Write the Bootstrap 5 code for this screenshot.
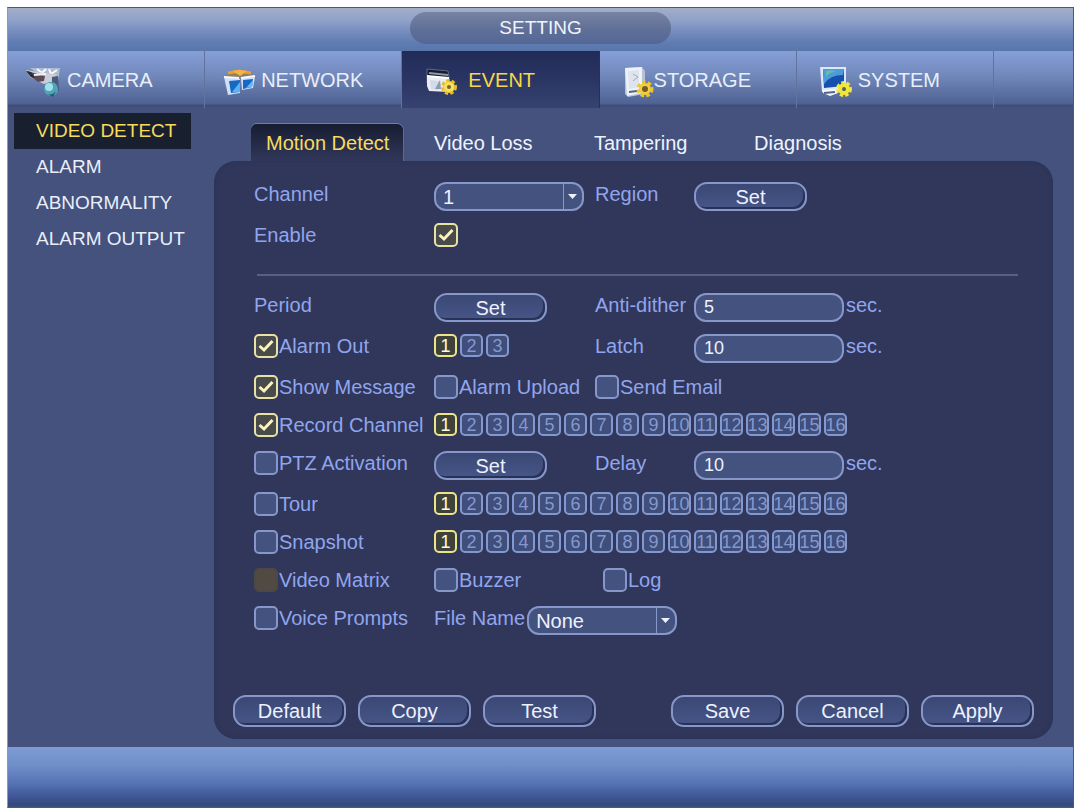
<!DOCTYPE html>
<html lang="en">
<head>
<meta charset="utf-8">
<meta name="viewport" content="width=device-width, initial-scale=1">
<title>Setting</title>
<link href="https://cdn.jsdelivr.net/npm/bootstrap@5.3.0/dist/css/bootstrap.min.css" rel="stylesheet">
<style>
  :root { --line: #8797ca; --label: #91a5ee; --panel: #30375a; --field: #44527f; }
  body { background: #fff; font-family: "Liberation Sans", Arial, sans-serif; font-size: 20px; line-height: 24px; padding: 7px 2px 2px 7px; }
  .app { min-height: calc(100vh - 9px); background: #44527d; border: 1px solid #4c5878; border-left-color: #8c97b5; }
  .titlebar { height: 43px; padding-top: 4px; background: linear-gradient(#a3aec8 0%, #8fa2c9 28%, #7189bb 60%, #5f7db3 80%, #5876aa 100%); }
  .title-pill { width: 261px; height: 32px; border-radius: 16px; font-size: 19px; line-height: 32px; color: #f0f4ff; background: linear-gradient(#7783a2, #5f6f96 55%, #546796); }
  .mainnav { display: grid; grid-template-columns: repeat(5, 197fr) 79fr; height: 57px; background: linear-gradient(#869fd8, #7087b9 45%, #4f6293 92%, #3c4b78 96%, #44527d); }
  .mainnav a { padding-left: 17px; color: #e9eefb; text-decoration: none; white-space: nowrap; border-right: 1px solid #61749f; }
  .mainnav a.active { color: #f7d64a; background: linear-gradient(#222b57, #2a3564 50%, #36426f); border-right-color: #25305c; }
  .mainnav svg { flex: none; height: 36px; }
  .sidebar { width: 206px; padding: 5px 23px 0 6px; }
  .sidebar a { height: 36px; line-height: 36px; padding-left: 22px; font-size: 19px; color: #e9eefb; text-decoration: none; white-space: nowrap; }
  .sidebar a.active { color: #f7dc5c; background: #182030; }
  .workspace { padding: 16px 20px 8px 0; }
  .subtabs { padding-left: 37px; }
  .subtabs button { height: 37px; width: 160px; padding: 0 15px; border: 0; background: none; color: #eef2ff; text-align: left; white-space: nowrap; }
  .subtabs button.active { width: 152px; margin-right: 16px; color: #f7dc5c; border-radius: 6px 6px 0 0; background: linear-gradient(#171c30, #262d4b 60%, var(--panel)); box-shadow: 0 -1px 0 #707da5, 1px 0 0 #5d6a96; }
  .panel { background: var(--panel); border-radius: 22px; padding: 21px 19px 12px; box-shadow: inset 0 0 4px #293258; }
  .settings { padding: 0 16px 0 21px; color: var(--label); }
  .line { display: grid; grid-template-columns: 180fr 161fr 99fr 324fr; align-items: start; margin-bottom: 12px; min-height: 26px; white-space: nowrap; }
  .line > * { min-width: 0; }
  .wide { grid-column: 2 / -1; }
  .rule { height: 2px; background: #566082; margin: 25px 0 17px 3px; }
  .unit { gap: 2px; }
  .pill { width: 113px; height: 29px; padding: 0; border: 2px solid var(--line); border-radius: 13px; background: linear-gradient(#3b4875, #465687); box-shadow: inset -2px -2px 0 #283156; color: #eef2ff; line-height: 24px; }
  .actions, .action-group { gap: 12px; }
  .actions .pill { height: 32px; }
  .field { width: 150px; height: 29px; padding: 0 8px; border: 2px solid var(--line); border-radius: 12px; background-color: var(--field); color: #eef2ff; font-size: 18px; line-height: 24px; }
  select.field { appearance: none; padding: 0 24px 0 7px; font-size: 20px; background-repeat: no-repeat; background-position: right center;
    background-image: url("data:image/svg+xml,%3Csvg xmlns='http://www.w3.org/2000/svg' width='19' height='25'%3E%3Cpath d='M.5 0v25' stroke='%238797ca'/%3E%3Cpath d='M5 10h9l-4.500 5z' fill='%23eef2ff'/%3E%3C/svg%3E"); }
  .tick { appearance: none; flex: none; width: 24px; height: 24px; margin: 0 1px 0 0; border: 2px solid var(--line); border-radius: 5px; background: var(--field) center / 20px no-repeat; }
  .tick:checked { border-color: #e8e3a2; background-color: #484a4c;
    background-image: url("data:image/svg+xml,%3Csvg xmlns='http://www.w3.org/2000/svg' viewBox='0 0 20 20'%3E%3Cpath d='M3.500 10l4.500 4L16.500 5' fill='none' stroke='%23fbf2bd' stroke-width='3'/%3E%3C/svg%3E"); }
  .tick:disabled { border-color: #4d4846; background-color: #504a42; }
  .tiles { gap: 3px; }
  .tiles label { width: 23px; height: 23px; border: 2px solid #8498d0; border-radius: 5px; background: #3f4e7b; color: #8498cf; font-size: 18px; line-height: 20px; display: flex; justify-content: center; overflow: hidden; }
  .tiles .btn-check:checked + label { border-color: #ece48a; background: #3f4238; color: #fffbe0; }
  .bottombar { height: 60px; background: linear-gradient(#7e9bd3, #6f8fc9 30%, #5674b3 60%, #435c9d 78%, #33497f 96%, #3d5173); }
</style>
</head>
<body>
<div class="app d-flex flex-column">
  <header class="titlebar"><h1 class="title-pill mx-auto mb-0 fw-normal text-center">SETTING</h1></header>

  <nav class="mainnav" aria-label="Sections">
    <a href="#" class="d-flex align-items-center">
      <svg width="42" viewBox="0 0 42 36" aria-hidden="true">
        <path d="M5 6h30l-2 13-7 2-7-5z" fill="#aebbd2"/>
        <path d="M12 7l5 4 4-4M24 7l2 5 6-4" fill="none" stroke="#f7faff" stroke-width="2"/>
        <path d="M1 8l18 3 12 1-3 7-9 3-14-7z" fill="#c9ced8"/>
        <path d="M2 9l18 5-1 5-6 1-8-6z" fill="#5d4c58"/>
        <path d="M1 9l5 1 4 6-4-1z" fill="#2f2932"/><path d="M9 13l12-1" stroke="#f0f2f7" stroke-width="2"/>
        <path d="M27 15l6-1 1 14-7 5z" fill="#4a5a7a"/>
        <circle cx="26" cy="27" r="7" fill="#4ea5ba"/><circle cx="24" cy="25" r="4" fill="#9fe3e8"/><path d="M20 31q6 4 11-2l-3 6z" fill="#285a73"/>
      </svg>CAMERA</a>
    <a href="#" class="d-flex align-items-center">
      <svg width="39" viewBox="0 0 39 36" aria-hidden="true">
        <path d="M3 15l4-3h21l5 3z" fill="#8d7f6a"/>
        <path d="M6 11l11-2 12 2" fill="none" stroke="#ed9d2f" stroke-width="3"/><path d="M11 9l7-1 7 1-7 5z" fill="#f4b544"/>
        <path d="M2 15l16 2v14l-12 2z" fill="#cfe0f7"/><path d="M7 19l11-1v12l-9 1z" fill="#1767c6"/><path d="M10 30l8-10v10z" fill="#57b2f2"/>
        <path d="M19 16l14-1-2 11-11 2z" fill="#cfe0f7"/><path d="M21 18l10-1-1 8-9 2z" fill="#1767c6"/><path d="M24 26l7-8-1 7z" fill="#65bbf5"/>
        <path d="M2 15l15 1M19 16l14-2" stroke="#f6faff" stroke-width="2"/>
      </svg>NETWORK</a>
    <a href="#" class="d-flex align-items-center active" aria-current="page">
      <svg width="49" viewBox="0 0 49 36" aria-hidden="true">
        <path d="M8 7l21 2 2 12H8z" fill="#161b2e" stroke="#606a80"/><path d="M10 11l19 2" stroke="#8d97a9" stroke-width="2"/>
        <path d="M8 14l22 2v14l-20-1-2-5z" fill="#e8edf5"/><path d="M11 18l9 1v9l-8-1z" fill="#d3dbe8"/><path d="M16 27l5-9 1 9z" fill="#8e9bb2"/><path d="M8 14l22 2" stroke="#fff" stroke-width="2"/>
        <circle cx="30" cy="25" r="6" fill="#f1cf3b" stroke="#e9bd28" stroke-width="4" stroke-dasharray="3 2"/><circle cx="30" cy="25" r="5" fill="#f7de65"/><circle cx="30" cy="25" r="2" fill="#7e6620"/>
      </svg>EVENT</a>
    <a href="#" class="d-flex align-items-center">
      <svg width="37" viewBox="0 0 37 36" aria-hidden="true">
        <path d="M8 6l17-1 3 4v23l-17 3-3-3z" fill="#b6c2d4"/><path d="M8 6l17-1v26l-15 3z" fill="#edf2f8"/><path d="M11 9l11-1v17l-10 2z" fill="#dde4ee"/>
        <path d="M16 12l5 3-5 4" fill="none" stroke="#9eadc4"/><path d="M12 30l8-1" stroke="#54637f" stroke-width="2"/>
        <circle cx="28" cy="27" r="6" fill="#f1cf3b" stroke="#edc72c" stroke-width="5" stroke-dasharray="3 2"/><circle cx="28" cy="27" r="5" fill="#efd04a"/><circle cx="28" cy="27" r="3" fill="#7b5a20"/>
      </svg>STORAGE</a>
    <a href="#" class="d-flex align-items-center">
      <svg width="44" viewBox="0 0 44 36" aria-hidden="true">
        <path d="M6 5h26v23l-24 2z" fill="#dce8f9"/><path d="M9 7h21v17l-20 2z" fill="#164fae"/><path d="M9 7h21l-1 6q-13 0-19 9z" fill="#4c9cdb"/><path d="M12 9q6-2 10 1-7 0-10 5z" fill="#66bba9"/>
        <path d="M8 28l16-1v4l-8 3-7-3z" fill="#f4f7fd"/><path d="M10 31l11-1" stroke="#52658b" stroke-width="2"/>
        <circle cx="30" cy="27" r="4" fill="none" stroke="#f2e63b" stroke-width="4"/><circle cx="30" cy="27" r="6" fill="none" stroke="#f2e63b" stroke-width="4" stroke-dasharray="3 2"/><circle cx="30" cy="27" r="2" fill="#596747"/>
      </svg>SYSTEM</a>
  </nav>

  <div class="d-flex flex-grow-1">
    <nav class="sidebar flex-shrink-0 d-flex flex-column" aria-label="Event">
      <a href="#" class="active" aria-current="page">VIDEO DETECT</a>
      <a href="#">ALARM</a>
      <a href="#">ABNORMALITY</a>
      <a href="#">ALARM OUTPUT</a>
    </nav>

    <main class="workspace flex-grow-1 d-flex flex-column">
      <div class="subtabs d-flex" role="tablist">
        <button type="button" role="tab" class="active" aria-selected="true">Motion Detect</button>
        <button type="button" role="tab" aria-selected="false">Video Loss</button>
        <button type="button" role="tab" aria-selected="false">Tampering</button>
        <button type="button" role="tab" aria-selected="false">Diagnosis</button>
      </div>

      <form class="panel flex-grow-1 d-flex flex-column justify-content-between">
        <div class="settings">
          <div class="line">
            <label for="channel">Channel</label>
            <div><select id="channel" class="field"><option>1</option><option>2</option><option>3</option></select></div>
            <span>Region</span>
            <div><button type="button" class="pill">Set</button></div>
          </div>
          <div class="line">
            <label for="enable">Enable</label>
            <div class="d-flex"><input id="enable" class="tick" type="checkbox" checked></div>
          </div>
          <div class="rule"></div>
          <div class="line">
            <span>Period</span>
            <div><button type="button" class="pill">Set</button></div>
            <label for="dither">Anti-dither</label>
            <div class="unit d-flex"><input id="dither" class="field" type="text" value="5"><span>sec.</span></div>
          </div>
          <div class="line">
            <label class="d-flex"><input class="tick" type="checkbox" checked>Alarm Out</label>
            <div class="tiles d-flex" data-name="alarm" data-count="3"></div>
            <label for="latch">Latch</label>
            <div class="unit d-flex"><input id="latch" class="field" type="text" value="10"><span>sec.</span></div>
          </div>
          <div class="line">
            <label class="d-flex"><input class="tick" type="checkbox" checked>Show Message</label>
            <label class="d-flex"><input class="tick" type="checkbox">Alarm Upload</label>
            <label class="d-flex"><input class="tick" type="checkbox">Send Email</label>
          </div>
          <div class="line">
            <label class="d-flex"><input class="tick" type="checkbox" checked>Record Channel</label>
            <div class="tiles d-flex wide" data-name="record" data-count="16"></div>
          </div>
          <div class="line">
            <label class="d-flex"><input class="tick" type="checkbox">PTZ Activation</label>
            <div><button type="button" class="pill">Set</button></div>
            <label for="delay">Delay</label>
            <div class="unit d-flex"><input id="delay" class="field" type="text" value="10"><span>sec.</span></div>
          </div>
          <div class="line">
            <label class="d-flex"><input class="tick" type="checkbox">Tour</label>
            <div class="tiles d-flex wide" data-name="tour" data-count="16"></div>
          </div>
          <div class="line">
            <label class="d-flex"><input class="tick" type="checkbox">Snapshot</label>
            <div class="tiles d-flex wide" data-name="snapshot" data-count="16"></div>
          </div>
          <div class="line">
            <label class="d-flex"><input class="tick" type="checkbox" disabled>Video Matrix</label>
            <label class="d-flex"><input class="tick" type="checkbox">Buzzer</label>
            <label class="d-flex ps-2"><input class="tick" type="checkbox">Log</label>
          </div>
          <div class="line">
            <label class="d-flex"><input class="tick" type="checkbox">Voice Prompts</label>
            <div class="unit wide d-flex"><label for="file">File Name</label><select id="file" class="field"><option>None</option></select></div>
          </div>
        </div>

        <div class="actions d-flex justify-content-between">
          <div class="action-group d-flex">
            <button type="button" class="pill">Default</button>
            <button type="button" class="pill">Copy</button>
            <button type="button" class="pill">Test</button>
          </div>
          <div class="action-group d-flex">
            <button type="submit" class="pill">Save</button>
            <button type="reset" class="pill">Cancel</button>
            <button type="button" class="pill">Apply</button>
          </div>
        </div>
      </form>
    </main>
  </div>

  <footer class="bottombar"></footer>
</div>
<script src="https://cdn.jsdelivr.net/npm/bootstrap@5.3.0/dist/js/bootstrap.bundle.min.js"></script>
<script>
  // Channel selectors: one toggle per channel, the first one switched on
  document.querySelectorAll('.tiles').forEach(function (box) {
    for (var n = 1; n <= +box.dataset.count; n++) {
      var id = box.dataset.name + n;
      box.insertAdjacentHTML('beforeend',
        '<input type="checkbox" class="btn-check" id="' + id + '"' + (n === 1 ? ' checked' : '') + '><label for="' + id + '">' + n + '</label>');
    }
  });
</script>
</body>
</html>
